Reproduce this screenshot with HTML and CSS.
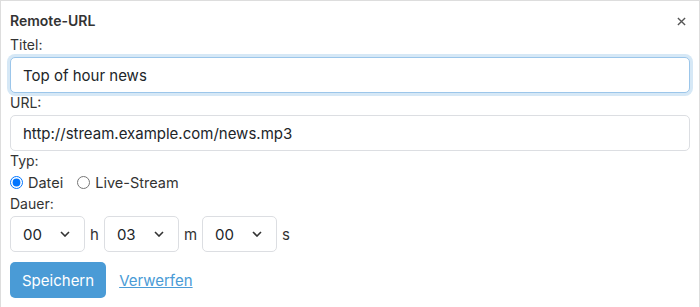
FILE: index.html
```html
<!DOCTYPE html>
<html lang="de">
<head>
  <meta charset="UTF-8">
  <title>Remote-URL</title>
  <link rel="stylesheet" href="styles.css">
</head>
<body>
  <div class="panel">
    <div class="panel-header">
      <span class="panel-title">Remote-URL</span>
      <button class="close-button" aria-label="Schließen">
        <svg viewBox="0 0 10 10" width="10" height="10">
          <path d="M1 1L9 9M9 1L1 9" stroke="currentColor" stroke-width="1.5" fill="none"/>
        </svg>
      </button>
    </div>

    <form class="remote-form">
      <label class="field-label" for="title">Titel:</label>
      <input id="title" class="text-input is-focused" type="text" value="Top of hour news">

      <label class="field-label" for="url">URL:</label>
      <input id="url" class="text-input" type="text" value="http://stream.example.com/news.mp3">

      <div class="field-label">Typ:</div>
      <div class="radio-row">
        <label class="radio-option"><input type="radio" name="type" checked> Datei</label>
        <label class="radio-option"><input type="radio" name="type"> Live-Stream</label>
      </div>

      <div class="field-label">Dauer:</div>
      <div class="duration-row">
        <div class="select-wrap">
          <select class="time-select"><option>00</option></select>
          <svg class="chevron" viewBox="0 0 10 6" width="10" height="6"><path d="M1 1l4 4 4-4" stroke="currentColor" stroke-width="1.6" fill="none"/></svg>
        </div>
        <span class="unit">h</span>
        <div class="select-wrap">
          <select class="time-select"><option>03</option></select>
          <svg class="chevron" viewBox="0 0 10 6" width="10" height="6"><path d="M1 1l4 4 4-4" stroke="currentColor" stroke-width="1.6" fill="none"/></svg>
        </div>
        <span class="unit">m</span>
        <div class="select-wrap">
          <select class="time-select"><option>00</option></select>
          <svg class="chevron" viewBox="0 0 10 6" width="10" height="6"><path d="M1 1l4 4 4-4" stroke="currentColor" stroke-width="1.6" fill="none"/></svg>
        </div>
        <span class="unit">s</span>
      </div>

      <div class="actions">
        <button type="button" class="save-button">Speichern</button>
        <a href="#" class="discard-link">Verwerfen</a>
      </div>
    </form>
  </div>
</body>
</html>
```

FILE: styles.css
```css
:root {
  --text-color: #333333;
  --input-text: #212529;
  --border-color: #dcdee2;
  --panel-border: #dddddd;
  --primary-color: #4a9bd6;
  --radius: 5px;
}

* {
  box-sizing: border-box;
}

body {
  margin: 0;
  font-family: Inter, "Noto Sans", sans-serif;
  color: var(--text-color);
  background: #ffffff;
}

.panel {
  width: 700px;
  min-height: 320px;
  border: 1px solid var(--panel-border);
  border-bottom: none;
  padding: 0 9px;
}

.panel-header {
  display: flex;
  align-items: center;
  justify-content: space-between;
  padding-top: 10px;
  height: 30px;
  margin-bottom: 4px;
}

.panel-title {
  font-size: 14px;
  font-weight: 600;
  line-height: 20px;
}

.close-button {
  background: transparent;
  border: none;
  color: #555555;
  padding: 0;
  margin-right: 4px;
  width: 10px;
  height: 10px;
  display: flex;
  align-items: center;
  justify-content: center;
  cursor: pointer;
}

.close-button svg {
  width: 9px;
  height: 9px;
}

.remote-form {
  display: flex;
  flex-direction: column;
}

.field-label {
  font-size: 14px;
  line-height: 20px;
  margin-bottom: 2px;
}

.text-input {
  width: 100%;
  height: 36px;
  padding: 0 12px;
  border: 1px solid var(--border-color);
  border-radius: var(--radius);
  font-family: inherit;
  font-size: 15px;
  color: var(--input-text);
  outline: none;
}

.text-input.is-focused {
  border-color: #9cc6ea;
  box-shadow: 0 0 0 3px #d6e8f6;
}

.radio-row {
  display: flex;
  gap: 14px;
  font-size: 14.5px;
  line-height: 20px;
  margin-bottom: 1px;
}

.radio-option {
  display: flex;
  align-items: center;
  gap: 5px;
}

.radio-option input {
  margin: 0 0 1px;
  width: 13px;
  height: 13px;
}

.duration-row {
  display: flex;
  align-items: center;
  gap: 5px;
  margin-bottom: 10px;
}

.select-wrap {
  position: relative;
  width: 75px;
  height: 36px;
}

.time-select {
  appearance: none;
  width: 100%;
  height: 100%;
  padding: 0 12px;
  border: 1px solid var(--border-color);
  border-radius: var(--radius);
  background: #ffffff;
  font-family: inherit;
  font-size: 15px;
  color: var(--input-text);
}

.chevron {
  position: absolute;
  right: 15px;
  top: 15px;
  color: #333333;
  pointer-events: none;
}

.unit {
  font-size: 15px;
  color: var(--text-color);
}

.actions {
  display: flex;
  align-items: center;
  gap: 13px;
}

.save-button {
  height: 36px;
  padding: 0 12px;
  border: none;
  border-radius: var(--radius);
  background: var(--primary-color);
  color: #ffffff;
  font-family: inherit;
  font-size: 15px;
  cursor: pointer;
}

.discard-link {
  color: var(--primary-color);
  font-size: 15px;
  text-decoration: underline;
}
```
